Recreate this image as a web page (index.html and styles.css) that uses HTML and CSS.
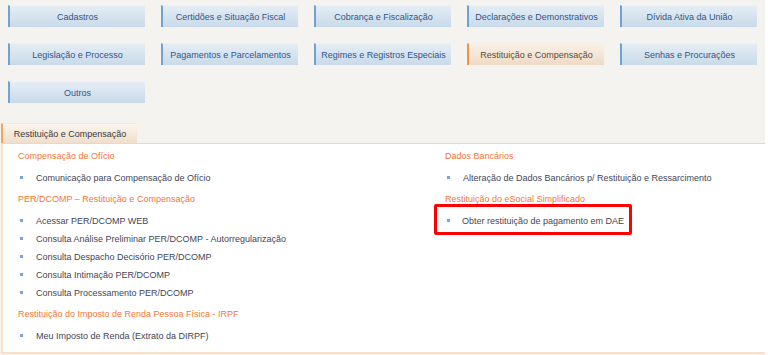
FILE: index.html
```html
<!DOCTYPE html>
<html lang="pt-BR">
<head>
  <meta charset="UTF-8">
  <meta name="viewport" content="width=device-width, initial-scale=1.0">
  <title>Restituição e Compensação</title>
  <link rel="stylesheet" href="styles.css">
</head>
<body>
  <div class="pagina">
    <div class="menu">
      <a class="botao">Cadastros</a>
      <a class="botao">Certidões e Situação Fiscal</a>
      <a class="botao">Cobrança e Fiscalização</a>
      <a class="botao">Declarações e Demonstrativos</a>
      <a class="botao">Dívida Ativa da União</a>
      <a class="botao">Legislação e Processo</a>
      <a class="botao">Pagamentos e Parcelamentos</a>
      <a class="botao">Regimes e Registros Especiais</a>
      <a class="botao ativo">Restituição e Compensação</a>
      <a class="botao">Senhas e Procurações</a>
      <a class="botao">Outros</a>
    </div>

    <div class="aba">Restituição e Compensação</div>

    <div class="painel">
      <div class="coluna esquerda">
        <h3>Compensação de Ofício</h3>
        <ul>
          <li>Comunicação para Compensação de Ofício</li>
        </ul>
        <h3>PER/DCOMP – Restituição e Compensação</h3>
        <ul>
          <li>Acessar PER/DCOMP WEB</li>
          <li>Consulta Análise Preliminar PER/DCOMP - Autorregularização</li>
          <li>Consulta Despacho Decisório PER/DCOMP</li>
          <li>Consulta Intimação PER/DCOMP</li>
          <li>Consulta Processamento PER/DCOMP</li>
        </ul>
        <h3>Restituição do Imposto de Renda Pessoa Física - IRPF</h3>
        <ul>
          <li>Meu Imposto de Renda (Extrato da DIRPF)</li>
        </ul>
      </div>
      <div class="coluna">
        <h3>Dados Bancários</h3>
        <ul>
          <li>Alteração de Dados Bancários p/ Restituição e Ressarcimento</li>
        </ul>
        <h3>Restituição do eSocial Simplificado</h3>
        <ul>
          <li class="destaque">Obter restituição de pagamento em DAE</li>
        </ul>
      </div>
    </div>
  </div>
</body>
</html>
```

FILE: styles.css
```css
body {
  margin: 0;
  background-color: #ffffff;
  font-family: "Liberation Sans", Arial, sans-serif;
  font-size: 9px;
}
.pagina {
  width: 765px;
  height: 355px;
  background-color: #f5f3ef;
  padding-top: 5px;
  box-sizing: border-box;
}
.menu {
  display: grid;
  grid-template-columns: repeat(5, 137px);
  column-gap: 16px;
  row-gap: 16px;
  padding-left: 8px;
}
.botao {
  display: block;
  height: 22px;
  line-height: 22px;
  text-align: center;
  color: #34548c;
  background: linear-gradient(#e4edf5, #c8dae9);
  border-left: 2px solid #6fa2d6;
  border-top: 1px solid #eaf1f7;
  box-sizing: border-box;
  cursor: pointer;
}
.botao.ativo {
  color: #5b4c40;
  background: linear-gradient(#fbf1e6, #efdac4);
  border-left-color: #f7913a;
  border-top-color: #fbeee0;
}
.aba {
  width: 136px;
  height: 20px;
  line-height: 20px;
  margin: 20px 0 0 1px;
  text-align: center;
  color: #3a3a3a;
  background: linear-gradient(#fbf5ee, #efdecb);
  border-left: 2px solid #f7a45a;
  border-top: 1px solid #fae6d2;
  box-sizing: border-box;
}
.painel {
  display: flex;
  margin-left: 1px;
  width: 764px;
  background-color: #ffffff;
  border-top: 1px solid #fcd4ab;
  border-left: 2px solid #fde2c6;
  border-bottom: 2px solid #fde0c3;
  padding: 0 0 7px 15px;
  box-sizing: border-box;
}
.coluna {
  flex: 1;
}
.coluna.esquerda {
  flex: none;
  width: 427px;
}
h3 {
  margin: 3px 0 4px 0;
  height: 18px;
  line-height: 18px;
  font-size: 9px;
  font-weight: normal;
  color: #f47636;
}
ul {
  list-style: none;
  margin: 0;
  padding: 0;
}
li {
  position: relative;
  height: 18px;
  line-height: 18px;
  padding-left: 18px;
  color: #3f4657;
}
li::before {
  content: "";
  position: absolute;
  left: 2px;
  top: 7px;
  width: 3px;
  height: 3px;
  background-color: #79a5d8;
  box-shadow: 0 0 1px #b7d0ec;
}
.destaque {
  padding-left: 17px;
}
.destaque::after {
  content: "";
  position: absolute;
  left: -11px;
  top: -8px;
  width: 198px;
  height: 31px;
  border: 3px solid #ff0000;
  border-radius: 2px;
  box-sizing: border-box;
}
```
